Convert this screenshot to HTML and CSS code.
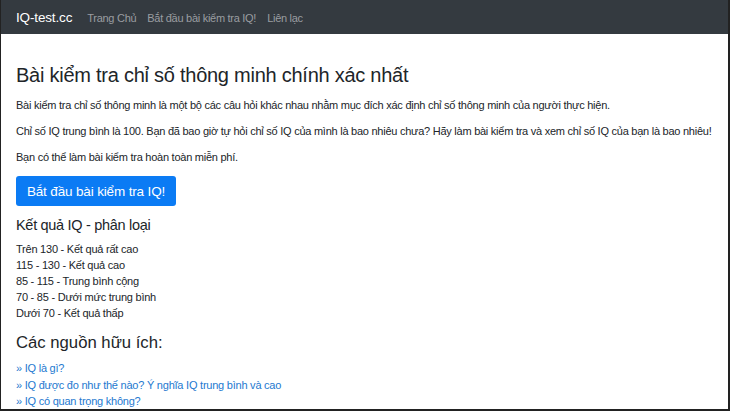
FILE: index.html
```html
<!DOCTYPE html>
<html lang="vi">
<head>
<meta charset="utf-8">
<title>IQ-test.cc</title>
<link rel="stylesheet" href="styles.css">
</head>
<body>
<div class="frame">
  <nav class="navbar">
    <a class="brand" href="#">IQ-test.cc</a>
    <ul class="nav">
      <li><a href="#">Trang Chủ</a></li>
      <li><a href="#">Bắt đầu bài kiểm tra IQ!</a></li>
      <li><a href="#">Liên lạc</a></li>
    </ul>
  </nav>
  <main class="content">
    <h1 class="title">Bài kiểm tra chỉ số thông minh chính xác nhất</h1>
    <p>Bài kiểm tra chỉ số thông minh là một bộ các câu hỏi khác nhau nhằm mục đích xác định chỉ số thông minh của người thực hiện.</p>
    <p>Chỉ số IQ trung bình là 100. Bạn đã bao giờ tự hỏi chỉ số IQ của mình là bao nhiêu chưa? Hãy làm bài kiểm tra và xem chỉ số IQ của bạn là bao nhiêu!</p>
    <p>Bạn có thể làm bài kiểm tra hoàn toàn miễn phí.</p>
    <a class="btn" href="#">Bắt đầu bài kiểm tra IQ!</a>
    <h4 class="sub">Kết quả IQ - phân loại</h4>
    <ul class="results">
      <li>Trên 130 - Kết quả rất cao</li>
      <li>115 - 130 - Kết quả cao</li>
      <li>85 - 115 - Trung bình cộng</li>
      <li>70 - 85 - Dưới mức trung bình</li>
      <li>Dưới 70 - Kết quả thấp</li>
    </ul>
    <h4 class="sub sub-sources">Các nguồn hữu ích:</h4>
    <ul class="links">
      <li><a href="#">» IQ là gì?</a></li>
      <li><a href="#">» IQ được đo như thế nào? Ý nghĩa IQ trung bình và cao</a></li>
      <li><a href="#">» IQ có quan trọng không?</a></li>
    </ul>
  </main>
</div>
</body>
</html>
```

FILE: styles.css
```css
* { box-sizing: border-box; }
html, body { margin: 0; padding: 0; background: #fff; }
body {
  font-family: "Liberation Sans", Arial, sans-serif;
  color: #212529;
}
.frame {
  width: 730px;
  height: 411px;
  overflow: hidden;
  border-left: 1px solid #222;
  border-right: 2px solid #222;
  border-bottom: 2px solid #222;
}
.navbar {
  height: 34px;
  background: #343a40;
  display: flex;
  align-items: center;
  padding-left: 15px;
}
.brand {
  color: #fff;
  font-size: 13.5px;
  letter-spacing: -0.15px;
  text-decoration: none;
  margin-right: 15px;
}
.nav {
  list-style: none;
  margin: 0;
  padding: 0;
  display: flex;
  gap: 11px;
}
.nav a {
  color: #9a9da1;
  text-decoration: none;
  font-size: 11px;
  letter-spacing: -0.28px;
}
.content {
  padding: 28px 3px 0 15px;
}
.title {
  font-size: 20px;
  letter-spacing: -0.25px;
  line-height: 26px;
  font-weight: normal;
  margin: 0 0 8px;
}
p {
  font-size: 11px;
  letter-spacing: -0.25px;
  line-height: 18px;
  margin: 0 0 8px;
}
.btn {
  display: inline-flex;
  align-items: center;
  justify-content: center;
  height: 30px;
  width: 160px;
  margin-top: 2px;
  background: #0b7bf4;
  color: #fff;
  border-radius: 3px;
  font-size: 13.5px;
  letter-spacing: -0.15px;
  text-decoration: none;
}
.sub {
  font-size: 14.5px;
  letter-spacing: -0.3px;
  line-height: 20px;
  font-weight: normal;
  margin: 9px 0 6px;
}
.sub-sources { font-size: 16.7px; letter-spacing: 0; margin: 12px 0 7px; }
.results, .links {
  list-style: none;
  margin: 0;
  padding: 0;
  font-size: 11px;
  letter-spacing: -0.23px;
  line-height: 16px;
}
.links { line-height: 16.5px; }
.links a { color: #2479d0; text-decoration: none; }
```
